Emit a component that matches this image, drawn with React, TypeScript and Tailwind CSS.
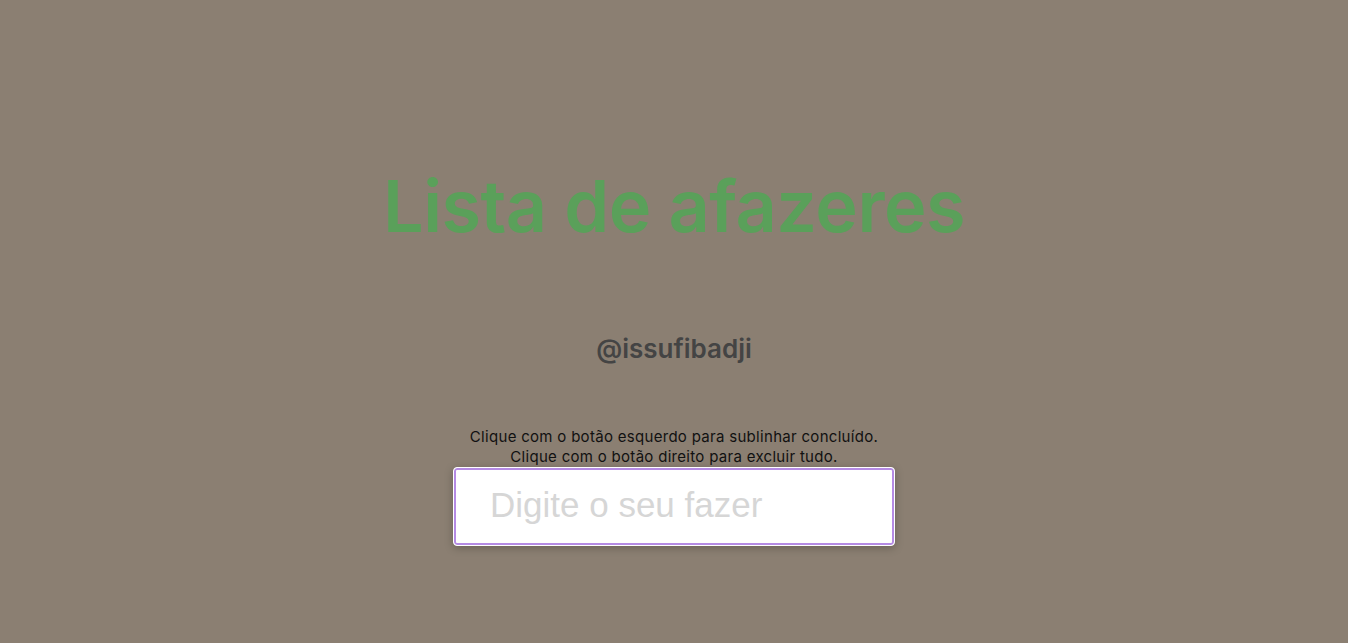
import { useState } from 'react';

export default function App() {
  const [todo, setTodo] = useState('');

  return (
    <div className="min-h-screen w-full bg-[#8b7f72] flex flex-col items-center font-['Inter',sans-serif]">
      {/* Title */}
      <h1 className="mt-[160px] text-[72px] leading-[92px] font-semibold tracking-[-0.5px] text-[#5aa05a]">
        Lista de afazeres
      </h1>

      {/* Author */}
      <h2 className="mt-[79px] text-[26px] leading-[36px] font-semibold text-[#444444]">@issufibadji</h2>

      {/* Hints */}
      <div className="mt-[60px] text-center text-[15px] leading-[20px] tracking-[0.3px] text-[#111111]">
        <p>Clique com o botão esquerdo para sublinhar concluído.</p>
        <p>Clique com o botão direito para excluir tudo.</p>
      </div>

      {/* Input */}
      <input
        autoFocus
        value={todo}
        onChange={(e) => setTodo(e.target.value)}
        placeholder="Digite o seu fazer"
        className="mt-0 w-[442px] h-[79px] pb-[3px] bg-white rounded-[4px] border border-white pl-[36px] text-[35px] font-['Liberation_Sans',sans-serif] text-[#333] placeholder:text-[#d6d6d6] caret-[#222] outline-none shadow-[inset_0_0_0_2px_#b58be4,0_2px_8px_rgba(0,0,0,0.25)]"
      />
    </div>
  );
}
